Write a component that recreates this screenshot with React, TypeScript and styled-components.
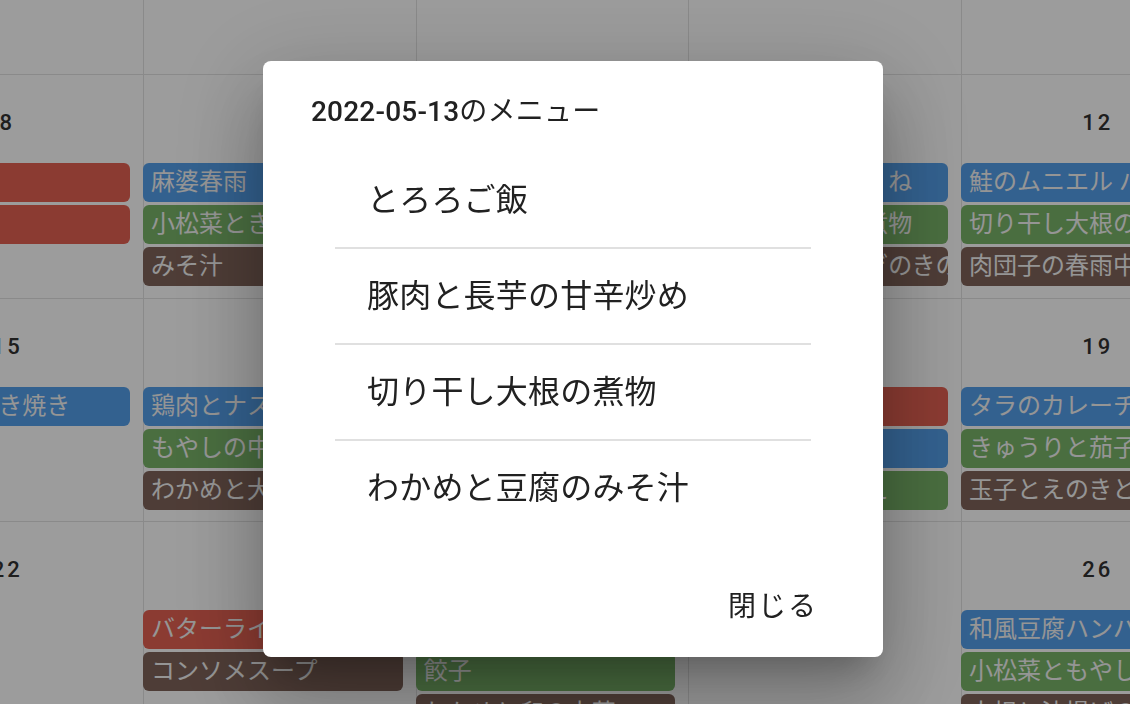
import React from "react";
import styled, { createGlobalStyle } from "styled-components";

type Kind = "staple" | "main" | "side" | "soup";

type Meal = { kind: Kind; name: string };

type Day = { date: number; meals: Meal[] };

const chipColors: { [key in Kind]: string } = {
    staple: "#e46152",
    main: "#549fea",
    side: "#79b469",
    soup: "#80645a",
};

const GlobalStyle = createGlobalStyle`
  html, body {
    margin: 0;
    padding: 0;
    overflow: hidden;
    background: #ffffff;
    font-family: Roboto, "Noto Sans CJK JP", sans-serif;
  }
`;

const Page = styled.div`
  width: 100vw;
  height: 100vh;
  overflow: hidden;
`;

const MonthGrid = styled.div`
  display: grid;
  grid-template-columns: repeat(7, 272.67px);
  grid-auto-rows: 223.5px;
  margin: -149.5px 0 0 -129.67px;
  width: max-content;
`;

const DayCell = styled.div`
  box-sizing: border-box;
  border-left: 1px solid #e2e2e2;
  border-top: 1px solid #e2e2e2;
  padding-top: 33px;
  display: flex;
  flex-direction: column;
  min-width: 0;
`;

const DayNumber = styled.div`
  height: 30px;
  line-height: 30px;
  text-align: center;
  font-size: 22px;
  font-weight: 500;
  letter-spacing: 3px;
  color: #313131;
`;

const ChipList = styled.div`
  display: flex;
  flex-direction: column;
  gap: 3px;
  margin-top: 25px;
  margin-left: -1px;
  width: 259.7px;
`;

const MealChip = styled.div<{ $kind: Kind }>`
  height: 39px;
  line-height: 39px;
  padding: 0 8px;
  border-radius: 6px;
  background: ${(p) => chipColors[p.$kind]};
  color: #f4f4f4;
  font-size: 24px;
  white-space: nowrap;
  overflow: hidden;
`;

const Backdrop = styled.div`
  position: fixed;
  inset: 0;
  box-sizing: border-box;
  padding: 14px 0 0 16px;
  background: rgba(0, 0, 0, 0.39);
  display: flex;
  align-items: center;
  justify-content: center;
`;

const Dialog = styled.div`
  width: 620px;
  background: #ffffff;
  border-radius: 8px;
  display: flex;
  flex-direction: column;
  box-shadow: 0px 22px 30px -14px rgba(0, 0, 0, 0.22),
    0px 48px 76px 6px rgba(0, 0, 0, 0.16),
    0px 18px 92px 16px rgba(0, 0, 0, 0.14);
`;

const DialogTitle = styled.h2`
  margin: 0;
  padding: 32px 48px 0;
  font-size: 28px;
  line-height: 38px;
  font-weight: 500;
  letter-spacing: 0.2px;
  color: #212121;
`;

const TitleSuffix = styled.span`
  font-weight: 400;
`;

const MenuList = styled.ul`
  list-style: none;
  margin: 22px 72px 0;
  padding: 0;
`;

const MenuItem = styled.li`
  padding: 23px 32px;
  font-size: 32px;
  line-height: 48px;
  letter-spacing: 0.2px;
  color: #212121;
  border-bottom: 2px solid #e0e0e0;

  &:last-child {
    border-bottom: none;
  }
`;

const DialogActions = styled.div`
  display: flex;
  justify-content: flex-end;
  padding: 35px 49px 14px 16px;
`;

const TextButton = styled.button`
  border: none;
  background: transparent;
  padding: 12px 16px;
  font-family: Roboto, "Noto Sans CJK JP", sans-serif;
  font-size: 28px;
  line-height: 49px;
  letter-spacing: 2px;
  color: #212121;
  border-radius: 8px;
  cursor: pointer;
`;

const weeks: Day[][] = [
    [1, 2, 3, 4, 5, 6, 7].map((date) => ({ date, meals: [] })),
    [
        { date: 8, meals: [{ kind: "staple", name: "オムライス" }, { kind: "staple", name: "ポトフ" }] },
        {
            date: 9,
            meals: [
                { kind: "main", name: "麻婆春雨" },
                { kind: "side", name: "小松菜ときのこのおひたし" },
                { kind: "soup", name: "みそ汁" },
            ],
        },
        {
            date: 10,
            meals: [
                { kind: "main", name: "豚の生姜焼き" },
                { kind: "side", name: "ほうれん草の胡麻和え" },
                { kind: "soup", name: "豆腐とねぎのみそ汁" },
            ],
        },
        {
            date: 11,
            meals: [
                { kind: "main", name: "豆腐と鶏肉のつくね" },
                { kind: "side", name: "ひじきと大豆の煮物" },
                { kind: "soup", name: "キャベツと玉ねぎのきのこスープ" },
            ],
        },
        {
            date: 12,
            meals: [
                { kind: "main", name: "鮭のムニエル バターソース" },
                { kind: "side", name: "切り干し大根の煮物" },
                { kind: "soup", name: "肉団子の春雨中華スープ" },
            ],
        },
        {
            date: 13,
            meals: [
                { kind: "staple", name: "とろろご飯" },
                { kind: "main", name: "豚肉と長芋の甘辛炒め" },
                { kind: "side", name: "切り干し大根の煮物" },
                { kind: "soup", name: "わかめと豆腐のみそ汁" },
            ],
        },
        { date: 14, meals: [] },
    ],
    [
        { date: 15, meals: [{ kind: "main", name: "豚こまのすき焼き" }] },
        {
            date: 16,
            meals: [
                { kind: "main", name: "鶏肉とナスの味噌炒め" },
                { kind: "side", name: "もやしの中華和え" },
                { kind: "soup", name: "わかめと大根のみそ汁" },
            ],
        },
        {
            date: 17,
            meals: [
                { kind: "main", name: "ぶりの照り焼き" },
                { kind: "side", name: "きんぴらごぼう" },
                { kind: "soup", name: "豚汁" },
            ],
        },
        {
            date: 18,
            meals: [
                { kind: "staple", name: "炊き込みご飯" },
                { kind: "main", name: "鯖の塩焼き" },
                { kind: "side", name: "小松菜の胡麻和え" },
            ],
        },
        {
            date: 19,
            meals: [
                { kind: "main", name: "タラのカレーチーズ焼き" },
                { kind: "side", name: "きゅうりと茄子の浅漬け" },
                { kind: "soup", name: "玉子とえのきと三つ葉のすまし汁" },
            ],
        },
        { date: 20, meals: [] },
        { date: 21, meals: [] },
    ],
    [
        { date: 22, meals: [] },
        {
            date: 23,
            meals: [
                { kind: "staple", name: "バターライス" },
                { kind: "soup", name: "コンソメスープ" },
            ],
        },
        {
            date: 24,
            meals: [
                { kind: "main", name: "鶏の唐揚げ" },
                { kind: "side", name: "餃子" },
                { kind: "soup", name: "わかめと卵の中華スープ" },
            ],
        },
        { date: 25, meals: [] },
        {
            date: 26,
            meals: [
                { kind: "main", name: "和風豆腐ハンバーグ" },
                { kind: "side", name: "小松菜ともやしのナムル" },
                { kind: "soup", name: "大根と油揚げのみそ汁" },
            ],
        },
        { date: 27, meals: [] },
        { date: 28, meals: [] },
    ],
];

const selectedMenu = ["とろろご飯", "豚肉と長芋の甘辛炒め", "切り干し大根の煮物", "わかめと豆腐のみそ汁"];

export default function App() {
    return (
        <Page>
            <GlobalStyle />
            <MonthGrid>
                {weeks.flat().map((day) => (
                    <DayCell key={day.date}>
                        <DayNumber>{day.date}</DayNumber>
                        <ChipList>
                            {day.meals.map((meal, i) => (
                                <MealChip key={i} $kind={meal.kind}>
                                    {meal.name}
                                </MealChip>
                            ))}
                        </ChipList>
                    </DayCell>
                ))}
            </MonthGrid>
            <Backdrop>
                <Dialog role="dialog">
                    <DialogTitle>
                        2022-05-13<TitleSuffix>のメニュー</TitleSuffix>
                    </DialogTitle>
                    <MenuList>
                        {selectedMenu.map((name) => (
                            <MenuItem key={name}>{name}</MenuItem>
                        ))}
                    </MenuList>
                    <DialogActions>
                        <TextButton>閉じる</TextButton>
                    </DialogActions>
                </Dialog>
            </Backdrop>
        </Page>
    );
}
